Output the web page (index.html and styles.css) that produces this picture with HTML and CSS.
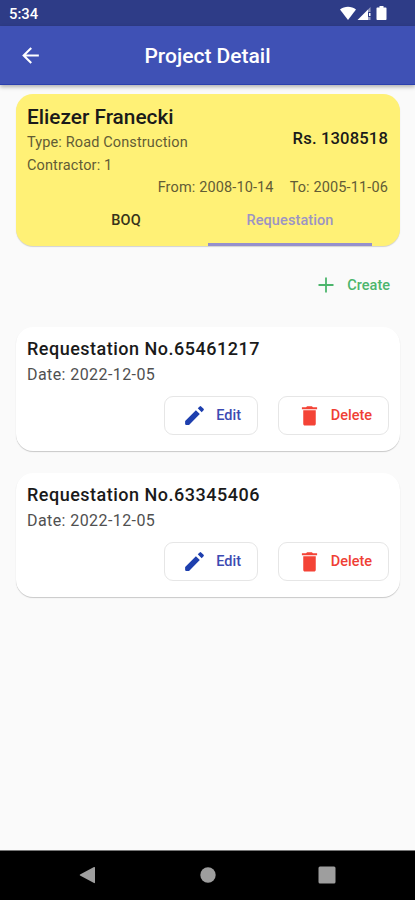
FILE: index.html
```html
<!DOCTYPE html>
<html lang="en">
<head>
<meta charset="utf-8">
<title>Project Detail</title>
<link rel="stylesheet" href="styles.css">
</head>
<body>
<svg class="defs" aria-hidden="true">
  <symbol id="pencil" viewBox="0 0 24 24"><path d="M3 17.25V20.200c0 .5.300.800.800.800h2.950L17.100 10.650l-3.750-3.750L3 17.250zM20.710 7.040a1 1 0 0 0 0-1.410l-2.340-2.340a1 1 0 0 0-1.410 0l-1.830 1.830 3.750 3.750 1.830-1.830z"/></symbol>
  <symbol id="trash" viewBox="0 0 24 24"><path d="M6 20c0 1.100.6 1.700 1.600 1.700h8.800c1 0 1.600-.6 1.600-1.700V7H6v13zM19.300 4h-4l-1-1H9.700l-1 1h-4v1.900h14.600V4z"/></symbol>
</svg>
<div class="status">
  <span class="time">5:34</span>
  <svg class="status-icons" viewBox="0 0 48 15">
    <path d="M0 3.500C4.500-.2 11.500-.2 16 3.500L8 14z"/>
    <path d="M17.500 14L28 3.500V14z"/><path class="dim" d="M28 3.500L30.500 1V6H28zM28 11h2.500v3H28z"/><path d="M29 7h1.500v3H29z"/>
    <path d="M39.500 0h4v1.500h2.300c.4 0 .7.300.7.700v11.100c0 .4-.3.700-.7.700h-8.600c-.4 0-.7-.3-.7-.7V2.200c0-.4.300-.7.700-.7h2.300z"/>
  </svg>
</div>
<header class="appbar">
  <svg class="back" viewBox="0 0 24 24"><path d="M20 11H7.830l5.590-5.590L12 4l-8 8 8 8 1.410-1.410L7.830 13H20v-2z"/></svg>
  <h1>Project Detail</h1>
</header>
<main>
  <section class="project">
    <div class="info">
      <div>
        <h2>Eliezer Franecki</h2>
        <p>Type: Road Construction</p>
        <p>Contractor: 1</p>
      </div>
      <strong class="price">Rs. 1308518</strong>
    </div>
    <div class="dates"><span>From: 2008-10-14</span><span>To: 2005-11-06</span></div>
    <nav class="tabs"><span class="tab">BOQ</span><span class="tab active">Requestation</span></nav>
  </section>
  <div class="create">
    <svg viewBox="0 0 24 24"><path d="M19.500 12.900h-6.600v6.600h-1.800v-6.600H4.500v-1.800h6.600V4.500h1.800v6.600h6.600z"/></svg>
    <span>Create</span>
  </div>
  <article class="card">
    <h3>Requestation No.65461217</h3>
    <p>Date: 2022-12-05</p>
    <div class="actions">
      <div class="btn edit"><svg><use href="#pencil"/></svg><span>Edit</span></div>
      <div class="btn delete"><svg><use href="#trash"/></svg><span>Delete</span></div>
    </div>
  </article>
  <article class="card">
    <h3>Requestation No.63345406</h3>
    <p>Date: 2022-12-05</p>
    <div class="actions">
      <div class="btn edit"><svg><use href="#pencil"/></svg><span>Edit</span></div>
      <div class="btn delete"><svg><use href="#trash"/></svg><span>Delete</span></div>
    </div>
  </article>
</main>
<footer class="navbar">
  <svg viewBox="0 0 18 18"><path d="M15 1c.5-.3 1 0 1 .5v15c0 .6-.5.800-1 .5L1 9.500c-.4-.2-.4-.8 0-1z"/></svg>
  <svg viewBox="0 0 18 18"><circle cx="9" cy="9" r="7.700"/></svg>
  <svg viewBox="0 0 18 18"><rect x=".5" y=".5" width="17" height="17" rx="1.500"/></svg>
</footer>
</body>
</html>
```
FILE: styles.css
```css
* { box-sizing: border-box; }
body {
  margin: 0;
  height: 900px;
  display: flex;
  flex-direction: column;
  overflow: hidden;
  background: #fafafa;
  font-family: Roboto, sans-serif;
  color: #1a1a1a;
}
h1, h2, h3, p { margin: 0; font-weight: 500; white-space: nowrap; }
svg { fill: currentColor; display: block; flex: none; }
.defs { position: absolute; width: 0; height: 0; }

.status {
  height: 26px;
  flex: none;
  background: #2e3c87;
  color: #fff;
  display: flex;
  justify-content: space-between;
  padding: 6px 27px 0 9px;
}
.time { font-size: 14.800px; line-height: 17px; font-weight: 500; }
.status-icons { width: 48px; height: 15px; }
.dim { opacity: .5; }

.appbar {
  height: 59px;
  flex: none;
  background: #3f51b5;
  border-bottom: 1px solid #2b3fae;
  box-shadow: 0 2px 4px rgba(0, 0, 0, .3);
  color: #fff;
  display: grid;
  grid-template-columns: 60px 1fr 60px;
  align-items: center;
  z-index: 1;
}
.back { width: 25px; height: 25px; margin-left: 18px; }
.appbar h1 { font-size: 21px; line-height: 26px; text-align: center; padding-top: 2px; }

main { flex: 1; padding: 9px 15px 0 16px; }
.project {
  height: 152px;
  background: #fff176;
  border-radius: 17px;
  box-shadow: 0 1px 1px rgba(0, 0, 0, .16);
  padding-top: 10px;
  display: flex;
  flex-direction: column;
}
.info { display: flex; justify-content: space-between; padding: 0 12px 0 11px; }
.info h2 { font-size: 20.800px; line-height: 27px; margin-bottom: 1px; }
.info p, .dates {
  font-size: 14.500px;
  line-height: 22.500px;
  font-weight: 400;
  letter-spacing: .13px;
  color: #625c35;
}
.price { font-size: 16.600px; font-weight: 500; line-height: 20px; margin-top: 25px; letter-spacing: .15px; }
.dates { display: flex; justify-content: flex-end; gap: 16px; padding-right: 12px; }
.tabs { display: flex; flex: 1; padding: 0 28px; }
.tab {
  flex: 1;
  text-align: center;
  font-size: 14.500px;
  line-height: 20px;
  font-weight: 500;
  padding-top: 11px;
  letter-spacing: .1px;
  color: #37331a;
}
.tab.active { color: #9c94c4; border-bottom: 3px solid #9590cc; }

.create {
  height: 36px;
  margin-top: 21px;
  padding-right: 10px;
  display: flex;
  justify-content: flex-end;
  align-items: center;
  gap: 9px;
  color: #4cb56c;
  font-size: 14.500px;
  font-weight: 500;
}
.create svg { width: 24px; height: 24px; }

.card {
  height: 124px;
  margin-top: 24px;
  padding: 9px 11px 0;
  background: #fff;
  border-radius: 17px;
  box-shadow: 0 1px 1px rgba(0, 0, 0, .2);
}
.card + .card { margin-top: 22px; }
.card h3 { font-size: 18px; line-height: 26px; letter-spacing: .5px; }
.card p { font-size: 16px; line-height: 26px; font-weight: 400; letter-spacing: .42px; color: #505050; }
.actions { display: flex; justify-content: flex-end; gap: 20px; margin-top: 8px; }
.btn {
  height: 39px;
  border: 1px solid #e6e6e6;
  border-radius: 9px;
  display: flex;
  align-items: center;
  justify-content: flex-end;
  padding-right: 16px;
  gap: 9px;
  font-size: 14.500px;
  font-weight: 500;
}
.btn svg { width: 25px; height: 25px; }
.edit { width: 94px; color: #3c4ab2; }
.edit svg { color: #1e3fae; }
.delete { width: 111px; color: #ef3f35; }
.delete svg { color: #f44336; }

.navbar {
  height: 50px;
  flex: none;
  background: #000;
  border-top: 1px solid #777;
  color: #9e9e9e;
  display: flex;
  justify-content: space-between;
  align-items: center;
  padding: 0 79px 1px;
}
.navbar svg { width: 18px; height: 18px; }
```
